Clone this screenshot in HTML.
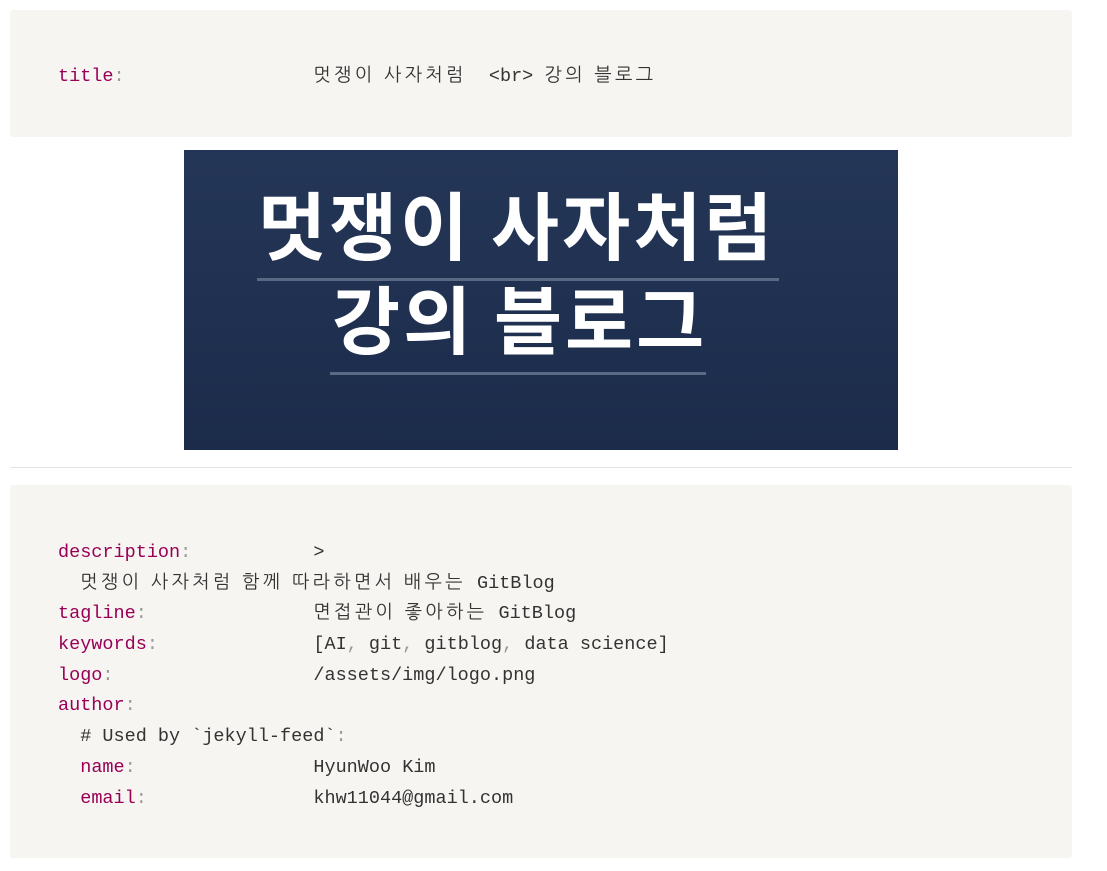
<!DOCTYPE html>
<html><head><meta charset="utf-8"><style>
body{margin:0;background:#fff;width:1107px;height:871px;position:relative;overflow:hidden}
.box{position:absolute;left:10px;width:1062px;background:#f6f5f2;border-radius:3px}
.c{position:absolute;left:48px;font-family:"Liberation Mono","Noto Sans CJK KR",monospace;font-size:18.5px;color:#333}
.c div{white-space:pre;height:30.7px;line-height:30.7px;overflow:visible}
.k{color:#990055}.p{color:#999}
.h{font-family:"NanumGothic","Noto Sans CJK KR",sans-serif;letter-spacing:3.3px;line-height:1}
.img{position:absolute;left:184px;top:150px;width:714px;height:300px;background:linear-gradient(#243657,#1c2b4a);}
.t{position:absolute;color:#fff;font-family:"Noto Sans CJK KR",sans-serif;font-weight:700;font-size:74px;line-height:1}
.ln{position:absolute;height:3px;background:#5a6a85}
</style></head><body>
<div class="box" style="top:10px;height:127px"><div class="c" style="top:52px"><div><span class="k">title</span><span class="p">:</span>                 <span class="h">멋쟁이 사자처럼</span>  &lt;br&gt; <span class="h">강의 블로그</span></div></div></div>
<div class="img">
<div class="t" style="left:74px;top:36px;letter-spacing:3px">멋쟁이 사자처럼</div>
<div class="ln" style="left:73px;top:128px;width:522px"></div>
<div class="t" style="left:148px;top:130px;letter-spacing:3px">강의 블로그</div>
<div class="ln" style="left:146px;top:222px;width:376px"></div>
</div>
<div style="position:absolute;left:10px;top:467px;width:1062px;height:1px;background:#e2e2e2"></div>
<div class="box" style="top:485px;height:373px"><div class="c" style="top:53px">
<div><span class="k">description</span><span class="p">:</span>           &gt;</div>
<div>  <span class="h">멋쟁이 사자처럼 함께 따라하면서 배우는</span> GitBlog</div>
<div><span class="k">tagline</span><span class="p">:</span>               <span class="h">면접관이 좋아하는</span> GitBlog</div>
<div><span class="k">keywords</span><span class="p">:</span>              [AI<span class="p">,</span> git<span class="p">,</span> gitblog<span class="p">,</span> data science]</div>
<div><span class="k">logo</span><span class="p">:</span>                  /assets/img/logo.png</div>
<div><span class="k">author</span><span class="p">:</span></div>
<div>  # Used by `jekyll-feed`<span class="p">:</span></div>
<div>  <span class="k">name</span><span class="p">:</span>                HyunWoo Kim</div>
<div>  <span class="k">email</span><span class="p">:</span>               khw11044@gmail.com</div>
</div></div>
</body></html>
